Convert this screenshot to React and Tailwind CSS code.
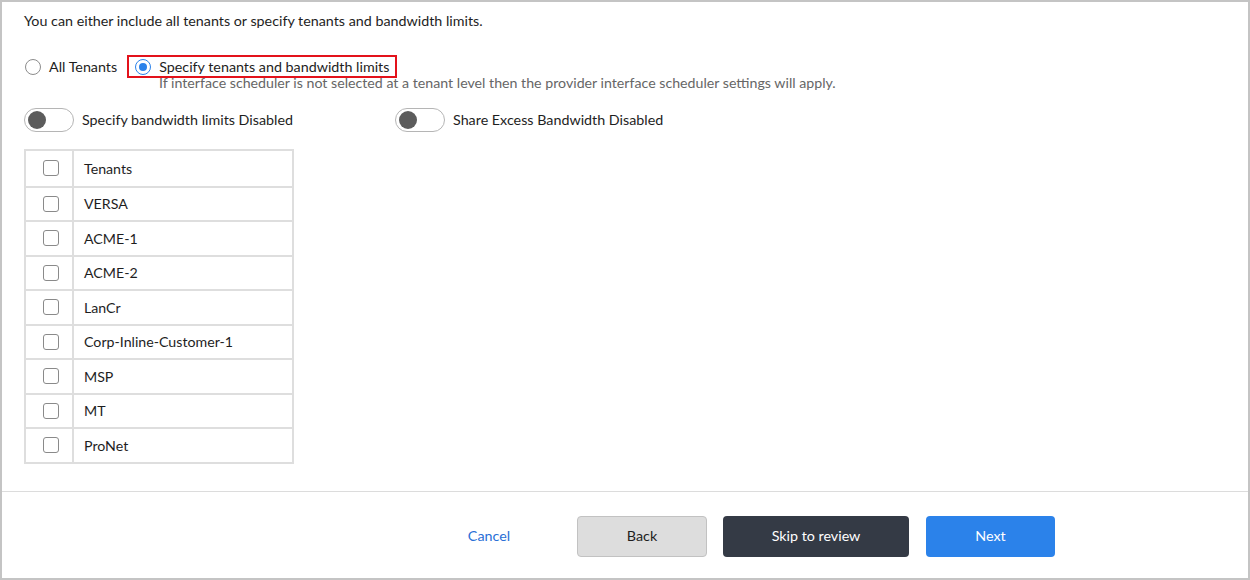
import React, { useState } from 'react';

const tenants = ['VERSA', 'ACME-1', 'ACME-2', 'LanCr', 'Corp-Inline-Customer-1', 'MSP', 'MT', 'ProNet'];

const Radio = ({ checked }) => (
    <span className={`w-4 h-4 rounded-full border flex items-center justify-center bg-white ${checked ? 'border-[#2b82ea]' : 'border-[#8c8c8c]'}`}>
        {checked && <span className="w-2 h-2 rounded-full bg-[#2b82ea]" />}
    </span>
);

const Toggle = () => (
    <span className="w-[50px] h-6 rounded-full border border-[#b5b5b5] bg-white flex items-center px-[3px]">
        <span className="w-[18px] h-[18px] rounded-full bg-[#5c5c5c]" />
    </span>
);

const Checkbox = () => (
    <span className="w-4 h-4 rounded-[3px] border border-[#8a8a8a] bg-white" />
);

const Row = ({ label, first }) => (
    <div className={`flex h-[34.5px] ${first ? '' : 'border-t-2 border-[#dedede]'}`}>
        <div className="w-[48px] border-r-2 border-[#dedede] flex items-center justify-center pl-[3px]">
            <Checkbox />
        </div>
        <div className="flex-1 flex items-center pl-[10px] text-[14.2px] text-[#1e1e1e]">{label}</div>
    </div>
);

export default function App() {
    const [mode] = useState('specify');

    return (
        <div className="w-[1250px] h-[580px] border-2 border-[#c4c4c4] bg-white flex flex-col font-['Lato','Liberation_Sans',sans-serif] text-[#1e1e1e]">
            <div className="flex-1 px-[22px]">
                <p className="mt-[9px] text-[14.3px] leading-5">You can either include all tenants or specify tenants and bandwidth limits.</p>

                <div className="mt-6 flex items-center text-[14.3px] h-[23px]">
                    <label className="flex items-center gap-2 pl-[1px]">
                        <Radio checked={mode === 'all'} />
                        <span>All Tenants</span>
                    </label>
                    <label className="ml-[10px] h-[23px] border-2 border-[#e3121b] px-[6px] flex items-center gap-2">
                        <Radio checked={mode === 'specify'} />
                        <span>Specify tenants and bandwidth limits</span>
                    </label>
                </div>
                <p className="pl-[135px] mt-[-2px] text-[14.2px] leading-[14px] text-[#666]">
                    If interface scheduler is not selected at a tenant level then the provider interface scheduler settings will apply.
                </p>

                <div className="mt-[18px] flex items-center h-6 text-[14.3px]">
                    <div className="flex items-center gap-2 w-[371px]">
                        <Toggle />
                        <span>Specify bandwidth limits Disabled</span>
                    </div>
                    <div className="flex items-center gap-2">
                        <Toggle />
                        <span>Share Excess Bandwidth Disabled</span>
                    </div>
                </div>

                <div className="mt-[17px] w-[270px] border-2 border-[#dedede]">
                    <Row label="Tenants" first />
                    {tenants.map((t) => (
                        <Row key={t} label={t} />
                    ))}
                </div>
            </div>

            <div className="h-[87px] border-t border-[#dcdcdc] flex items-center pt-[2px] text-[14.3px]">
                <button className="ml-[422px] w-[130px] h-[41px] text-[#2a6fd6]">Cancel</button>
                <button className="ml-[23px] w-[130px] h-[41px] rounded-[4px] border border-[#c2c2c2] bg-[#dddddd] text-[#1e1e1e]">Back</button>
                <button className="ml-4 w-[186px] h-[41px] rounded-[4px] bg-[#343a45] text-white">Skip to review</button>
                <button className="ml-[17px] w-[129px] h-[41px] rounded-[4px] bg-[#2b82ea] text-white">Next</button>
            </div>
        </div>
    );
}
